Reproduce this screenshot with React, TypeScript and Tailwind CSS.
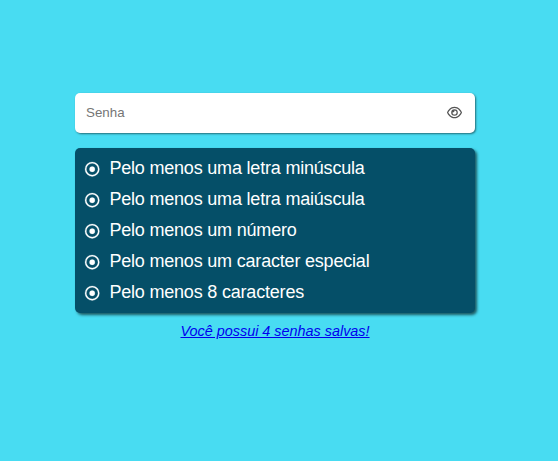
import { FaRegCircleDot, FaRegEye } from "react-icons/fa6";

const rules = [
  "Pelo menos uma letra minúscula",
  "Pelo menos uma letra maiúscula",
  "Pelo menos um número",
  "Pelo menos um caracter especial",
  "Pelo menos 8 caracteres",
];

export default function App() {
  return (
    <main className="flex min-h-screen flex-col bg-[#48dcf2] pt-[93px] pl-[75px] font-['Liberation_Sans',Arial,sans-serif]">
      <div className="flex h-10 w-[400px] items-center rounded-[5px] bg-white pr-[13px] pb-px pl-[11px] shadow-[1px_1px_2px_#00000080]">
        <input
          type="text"
          placeholder="Senha"
          className="min-w-0 flex-1 text-[13.333px] outline-none placeholder:text-[#757575]"
        />
        <FaRegEye className="text-[15px] text-[#555]" />
      </div>
      <ul className="mt-[15px] flex h-[165px] w-[400px] flex-col rounded-[5px] bg-[#054f68] pt-[5px] pl-[10px] text-lg tracking-[-0.195px] text-white shadow-[2px_2px_3px_#00000099]">
        {rules.map((rule) => (
          <li key={rule} className="flex h-[31px] items-center gap-[10px]">
            <FaRegCircleDot className="mt-px overflow-visible text-[14.4px]" stroke="currentColor" strokeWidth="8" />
            <span className="pb-0.5">{rule}</span>
          </li>
        ))}
      </ul>
      <a href="#" className="mt-2 w-[400px] text-center text-[14.4px] text-[#0000ee] italic underline">
        Você possui 4 senhas salvas!
      </a>
    </main>
  );
}
